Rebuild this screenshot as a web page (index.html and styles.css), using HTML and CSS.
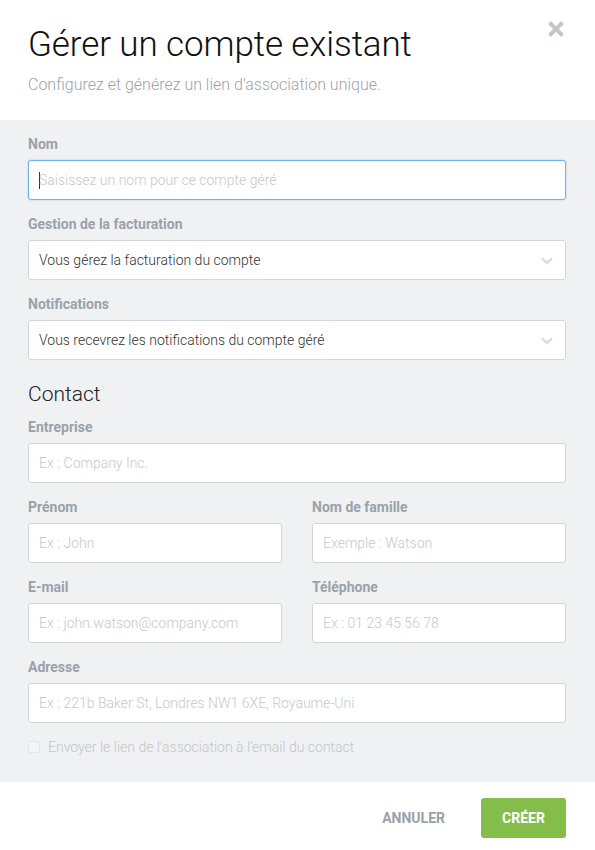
FILE: index.html
```html
<!DOCTYPE html>
<html lang="fr">
<head>
<meta charset="utf-8">
<link rel="stylesheet" href="styles.css">
</head>
<body>
<div class="modal">
  <header class="head">
    <h1 class="title">Gérer un compte existant</h1>
    <p class="subtitle">Configurez et générez un lien d'association unique.</p>
    <button class="close" aria-label="Fermer">
      <svg width="18" height="18" viewBox="0 0 18 18"><path d="M2.5 2.5 L15.5 15.5 M15.5 2.5 L2.5 15.5" stroke="#c3c7cb" stroke-width="4" stroke-linecap="butt"/></svg>
    </button>
  </header>
  <main class="body">
    <div class="field">
      <label class="label">Nom</label>
      <div class="input focus"><span class="caret"></span><span class="ph">Saisissez un nom pour ce compte géré</span></div>
    </div>
    <div class="field">
      <label class="label">Gestion de la facturation</label>
      <div class="input select"><span class="val">Vous gérez la facturation du compte</span>
        <svg class="chev" width="12" height="8" viewBox="0 0 12 8"><path d="M1 1.5 L6 6 L11 1.5" stroke="#dcdfe2" stroke-width="2.6" fill="none"/></svg></div>
    </div>
    <div class="field">
      <label class="label">Notifications</label>
      <div class="input select"><span class="val">Vous recevrez les notifications du compte géré</span>
        <svg class="chev" width="12" height="8" viewBox="0 0 12 8"><path d="M1 1.5 L6 6 L11 1.5" stroke="#dcdfe2" stroke-width="2.6" fill="none"/></svg></div>
    </div>
    <h2 class="section">Contact</h2>
    <div class="field">
      <label class="label">Entreprise</label>
      <div class="input"><span class="ph">Ex : Company Inc.</span></div>
    </div>
    <div class="row">
      <div class="field">
        <label class="label">Prénom</label>
        <div class="input"><span class="ph">Ex : John</span></div>
      </div>
      <div class="field">
        <label class="label">Nom de famille</label>
        <div class="input"><span class="ph">Exemple : Watson</span></div>
      </div>
    </div>
    <div class="row">
      <div class="field">
        <label class="label">E-mail</label>
        <div class="input"><span class="ph">Ex : john.watson@company.com</span></div>
      </div>
      <div class="field">
        <label class="label">Téléphone</label>
        <div class="input"><span class="ph">Ex : 01 23 45 56 78</span></div>
      </div>
    </div>
    <div class="field">
      <label class="label">Adresse</label>
      <div class="input"><span class="ph">Ex : 221b Baker St, Londres NW1 6XE, Royaume-Uni</span></div>
    </div>
    <div class="check">
      <span class="box"></span>
      <span class="check-text">Envoyer le lien de l'association à l'email du contact</span>
    </div>
  </main>
  <footer class="foot">
    <button class="btn cancel">ANNULER</button>
    <button class="btn create">CRÉER</button>
  </footer>
</div>
</body>
</html>
```

FILE: styles.css
```css
* { box-sizing: border-box; }
html, body { margin: 0; padding: 0; background: #fff; }
body { font-family: Roboto, "Liberation Sans", sans-serif; width: 595px; height: 850px; overflow: hidden; }
.modal { width: 595px; }
.light { font-family: "Roboto Light", Roboto, "Liberation Sans", sans-serif; }
.head { position: relative; height: 120px; padding: 24px 28px 0 28px; }
.title { margin: 0; font-family: "Roboto Light", Roboto, sans-serif; font-weight: 300; font-size: 35px; line-height: 42px; color: #111; letter-spacing: -0.1px; }
.subtitle { margin: 9px 0 0 0; font-family: "Roboto Light", Roboto, sans-serif; font-weight: 300; font-size: 16px; line-height: 19px; color: #9ca3aa; }
.close { position: absolute; top: 20px; left: 547px; width: 18px; height: 18px; padding: 0; border: 0; background: none; }
.close svg { display: block; }
.body { background: #f0f1f3; padding: 16px 29px 20px 28px; display: flex; flex-direction: column; height: 662px; }
.field { display: flex; flex-direction: column; margin-bottom: 16px; }
.label { font-size: 14px; font-weight: 700; line-height: 16px; color: #9aa2a9; margin-bottom: 8px; }
.input { position: relative; height: 40px; background: #fff; border: 1px solid #d3d6d9; border-radius: 3px; display: flex; align-items: center; padding: 0 10px; font-family: "Roboto Light", Roboto, sans-serif; font-size: 14px; font-weight: 300; }
.input.focus { border-color: #6eb1f0; box-shadow: 0 0 2px rgba(110,177,240,0.6); }
.caret { width: 1px; height: 17px; background: #333; margin-right: -1px; }
.ph { color: #c4c9cd; white-space: nowrap; }
.val { color: #333; font-size: 14px; }
.chev { position: absolute; right: 12px; top: 16px; }
.section { margin: 6px 0 13px 0; font-family: "Roboto Light", Roboto, sans-serif; font-size: 21px; font-weight: 300; line-height: 24px; color: #222; }
.row { display: grid; grid-template-columns: 254px 254px; column-gap: 30px; }
.check { display: flex; align-items: center; gap: 8px; height: 16px; }
.box { width: 12px; height: 12px; border: 1px solid #e2e4e6; border-radius: 2px; background: #f3f4f5; }
.check-text { font-family: "Roboto Light", Roboto, sans-serif; font-size: 14px; font-weight: 300; color: #c2c6ca; }
.foot { height: 68px; display: flex; justify-content: flex-end; align-items: flex-start; padding: 16px 29px 0 0; gap: 36px; }
.btn { font-family: Roboto, "Liberation Sans", sans-serif; font-weight: 700; font-size: 14px; border: 0; cursor: pointer; }
.cancel { background: none; color: #9aa2a9; padding: 0; height: 40px; }
.create { background: #84bd4a; color: #fff; width: 85px; height: 40px; border-radius: 3px; }
```
